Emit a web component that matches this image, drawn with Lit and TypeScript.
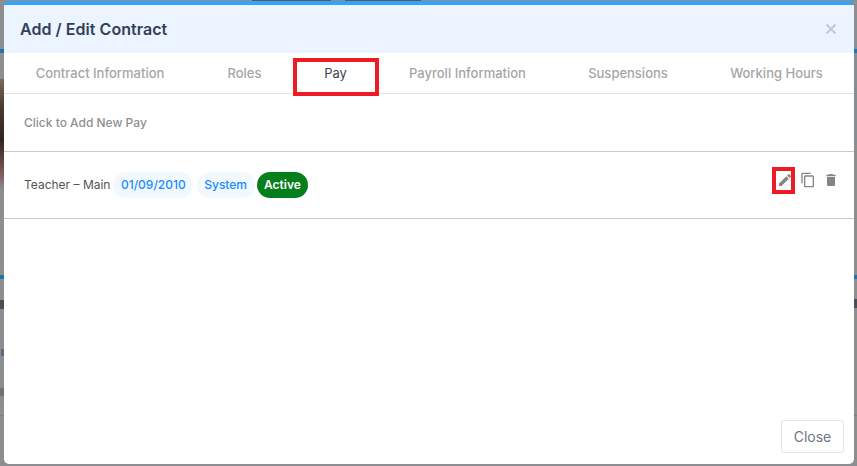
import { LitElement, html, css } from "lit";
import { customElement } from "lit/decorators.js";

@customElement("app-root")
export class AppRoot extends LitElement {
  static styles = css`
    :host { display: block; width: 857px; height: 466px; position: relative; overflow: hidden; background: #8c8e90; font-family: Inter, "Liberation Sans", sans-serif; }
    .bd { position: absolute; }
    .bd-top1 { left: 252px; top: 0; width: 79px; height: 1px; background: #55585c; }
    .bd-top2 { left: 345px; top: 0; width: 76px; height: 1px; background: #55585c; }
    .bd-blue { left: 0; right: 0; top: 275px; height: 4px; background: #1f74b4; }
    .bd-blue2 { left: 0; right: 0; top: 49px; height: 4px; background: #1f74b4; }
    .bd-photo { left: 0; top: 79px; width: 4px; height: 111px; background: linear-gradient(#7a6a5c, #4a3a30 25%, #2e2420 55%, #7f5a5c 85%, #8c8e90); }
    .bd-panel { left: 854px; top: 53px; width: 3px; height: 90px; background: #868d94; }
    .bd-line { left: 0; right: 0; height: 1px; background: #7c7e80; }
    .bd-text { width: 4px; height: 9px; background: #4a4e58; }
    .bd-r { left: 1px; top: 349px; width: 3px; height: 7px; background: #5a6a80; }
    .bd-s { left: 0; top: 388px; width: 4px; height: 8px; background: #6f7276; }
    .modal { position: absolute; left: 4px; top: 1px; width: 850px; height: 463px; box-sizing: border-box; background: #fff; border-top: 4px solid #36a3f7; border-radius: 5px; display: flex; flex-direction: column; overflow: hidden; }
    .head { height: 48px; flex: none; background: #ebf4ff; display: flex; align-items: center; justify-content: space-between; padding: 0 16px; }
    .title { font-size: 16px; font-weight: 600; color: #34405a; letter-spacing: 0.05px; }
    .x { width: 10px; height: 10px; margin-right: 2px; display: block; }
    .tabs { display: grid; grid-template-columns: 192px 97px 85px 179px 142px 155px; flex: none; height: 41px; }
    .tab { display: flex; align-items: center; justify-content: center; font-size: 13px; font-weight: 500; color: #a6a6a6; border-bottom: 1px solid #e2e2e2; white-space: nowrap; }
    .tab.on { color: #3f4450; font-weight: 400; }
    .add { flex: none; height: 58px; display: flex; align-items: center; padding: 0 20px 1px; font-size: 12px; font-weight: 500; color: #8f8f8f; border-bottom: 1px solid #c9c9c9; box-sizing: border-box; }
    .row { flex: none; height: 67px; box-sizing: border-box; display: flex; align-items: center; padding: 0 20px; border-bottom: 1px solid #c9c9c9; }
    .name { font-size: 12px; color: #545454; margin-right: 3px; margin-top: -2px; }
    .pill { font-size: 12px; font-weight: 500; padding: 0 7.5px; height: 26px; line-height: 26px; border-radius: 13px; margin-right: 3.5px; background: #f1f9fe; color: #1a8cff; }
    .pill.g { background: #057e1c; color: #fff; font-weight: 600; padding: 0 7px; margin-left: -1px; }
    .icons { margin-left: auto; display: flex; align-items: center; gap: 7px; margin-top: -10px; margin-right: -5px; }
    .icons svg { display: block; width: 16px; height: 16px; fill: #858585; }
    .grow { flex: 1; }
    .foot { flex: none; display: flex; justify-content: flex-end; padding: 0 10px 11px 0; }
    .close { width: 63px; height: 33px; box-sizing: border-box; border: 1px solid #e4e4e4; border-radius: 3px; background: #fff; display: flex; align-items: center; justify-content: center; font-size: 14px; color: #6c7585; font-family: inherit; padding: 0; }
    .mark { position: absolute; box-sizing: border-box; border: 4px solid #ed1c24; pointer-events: none; }
    .m1 { left: 293px; top: 58px; width: 86px; height: 38px; }
    .m2 { left: 772px; top: 167px; width: 23px; height: 27px; }
  `;

  render() {
    return html`
      <div class="bd bd-top1"></div>
      <div class="bd bd-top2"></div>
      <div class="bd bd-blue2"></div>
      <div class="bd bd-blue"></div>
      <div class="bd bd-photo"></div>
      <div class="bd bd-panel"></div>
      <div class="bd bd-text" style="left:0;top:300px"></div>
      <div class="bd bd-text" style="left:854px;top:299px"></div>
      <div class="bd bd-r"></div>
      <div class="bd bd-s"></div>
      <div class="bd bd-line" style="top:415px"></div>
      <div class="modal">
        <div class="head">
          <div class="title">Add / Edit Contract</div>
          <svg class="x" viewBox="0 0 10 10"><path d="M.5.5l9 9M9.500.5l-9 9" stroke="#c3c9d2" stroke-width="2" fill="none"/></svg>
        </div>
        <div class="tabs">
          <div class="tab">Contract Information</div>
          <div class="tab">Roles</div>
          <div class="tab on">Pay</div>
          <div class="tab">Payroll Information</div>
          <div class="tab">Suspensions</div>
          <div class="tab">Working Hours</div>
        </div>
        <div class="add">Click to Add New Pay</div>
        <div class="row">
          <span class="name">Teacher – Main</span>
          <span class="pill">01/09/2010</span>
          <span class="pill">System</span>
          <span class="pill g">Active</span>
          <div class="icons">
            <svg viewBox="0 0 24 24"><path d="M3 17.250V21h3.750L17.810 9.940l-3.750-3.750L3 17.250zM20.710 7.040a1 1 0 0 0 0-1.410l-2.340-2.340a1 1 0 0 0-1.410 0l-1.830 1.830 3.750 3.750 1.830-1.830z"/></svg>
            <svg viewBox="0 0 24 24"><path d="M16 1H4c-1.100 0-2 .9-2 2v14h2V3h12V1zm3 4H8c-1.100 0-2 .9-2 2v14c0 1.100.9 2 2 2h11c1.100 0 2-.9 2-2V7c0-1.100-.9-2-2-2zm0 16H8V7h11v14z"/></svg>
            <svg viewBox="0 0 24 24"><path d="M6 19c0 1.100.9 2 2 2h8c1.100 0 2-.9 2-2V7H6v12zM19 4h-3.500l-1-1h-5l-1 1H5v2h14V4z"/></svg>
          </div>
        </div>
        <div class="grow"></div>
        <div class="foot"><button class="close">Close</button></div>
      </div>
      <div class="mark m1"></div>
      <div class="mark m2"></div>
    `;
  }
}
